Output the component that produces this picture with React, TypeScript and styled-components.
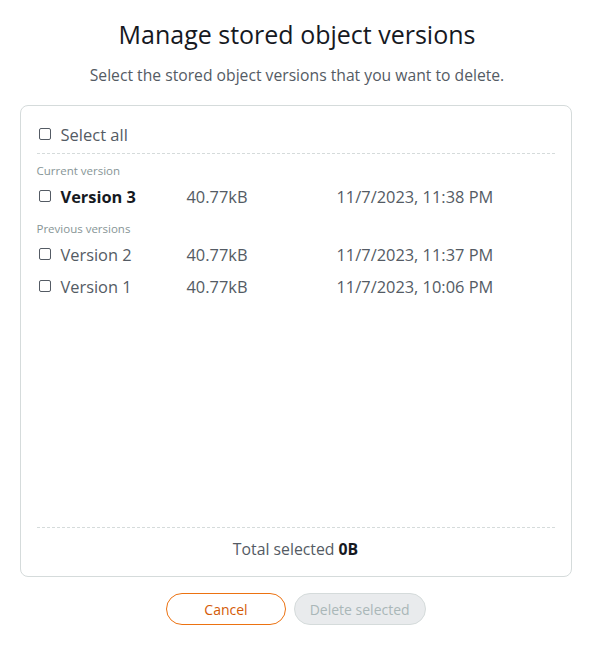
import React from "react";
import styled, { createGlobalStyle } from "styled-components";

const versions = {
  current: [{ id: 3, name: "Version 3", size: "40.77kB", date: "11/7/2023, 11:38 PM" }],
  previous: [
    { id: 2, name: "Version 2", size: "40.77kB", date: "11/7/2023, 11:37 PM" },
    { id: 1, name: "Version 1", size: "40.77kB", date: "11/7/2023, 10:06 PM" },
  ],
};

const App = () => {
  return (
    <>
      <GlobalStyle />
      <Page>
        <Title>Manage stored object versions</Title>
        <Subtitle>Select the stored object versions that you want to delete.</Subtitle>
        <Panel>
          <SelectAll>
            <Check type="checkbox" id="all" />
            <label htmlFor="all">Select all</label>
          </SelectAll>
          <List>
            <GroupLabel>Current version</GroupLabel>
            {versions.current.map(v => (
              <Row key={v.id} $current>
                <NameCell>
                  <Check type="checkbox" />
                  <span>{v.name}</span>
                </NameCell>
                <span>{v.size}</span>
                <span>{v.date}</span>
              </Row>
            ))}
            <GroupLabel $spaced>Previous versions</GroupLabel>
            {versions.previous.map(v => (
              <Row key={v.id}>
                <NameCell>
                  <Check type="checkbox" />
                  <span>{v.name}</span>
                </NameCell>
                <span>{v.size}</span>
                <span>{v.date}</span>
              </Row>
            ))}
          </List>
          <Total>
            Total selected <b>0B</b>
          </Total>
        </Panel>
        <Actions>
          <Button>Cancel</Button>
          <Button $primary disabled>
            Delete selected
          </Button>
        </Actions>
      </Page>
    </>
  );
};

const GlobalStyle = createGlobalStyle`
  body {
    margin: 0;
    background: #fff;
    font-family: "Open Sans", "Noto Sans", sans-serif;
    color: #545b64;
  }
`;

const Page = styled.main`
  width: 594px;
  display: flex;
  flex-direction: column;
  align-items: center;
`;

const Title = styled.h1`
  margin: 17px 0 0;
  font-size: 25px;
  font-weight: 400;
  line-height: 34px;
  color: #16191f;
`;

const Subtitle = styled.p`
  margin: 14px 0 0;
  font-size: 15.7px;
  line-height: 20px;
  color: #545b64;
`;

const Panel = styled.section`
  box-sizing: border-box;
  margin: 20px 0 0 -3px;
  width: 552px;
  height: 472px;
  border: 1px solid #d5dbdb;
  border-radius: 8px;
  padding: 0 16px;
  display: flex;
  flex-direction: column;
`;

const SelectAll = styled.div`
  display: flex;
  align-items: center;
  height: 48px;
  padding-top: 9px;
  box-sizing: border-box;
  font-size: 16.5px;
  border-bottom: 1px dashed #d5dbdb;

  & label {
    cursor: pointer;
  }
`;

const List = styled.div`
  flex: 1;
  border-bottom: 1px dashed #d5dbdb;
  padding-top: 9px;
`;

const GroupLabel = styled.div<{ $spaced?: boolean }>`
  font-size: 11.5px;
  line-height: 16px;
  margin: ${p => (p.$spaced ? 9 : 0)}px 0 1px;
  color: #879596;
`;

const Row = styled.div<{ $current?: boolean }>`
  display: grid;
  grid-template-columns: 150px 150px 1fr;
  align-items: center;
  height: 32px;
  font-size: 16.4px;
  color: #545b64;

  & > div span {
    font-weight: ${p => (p.$current ? 700 : 400)};
    color: ${p => (p.$current ? "#16191f" : "#545b64")};
  }
`;

const NameCell = styled.div`
  display: flex;
  align-items: center;
`;

const Check = styled.input`
  all: unset;
  box-sizing: border-box;
  width: 12px;
  height: 12px;
  border: 1px solid #545b64;
  border-radius: 2px;
  margin: 0 10px 0 2px;
  cursor: pointer;
`;

const Total = styled.div`
  height: 48px;
  padding-bottom: 7px;
  box-sizing: border-box;
  display: flex;
  align-items: center;
  justify-content: center;
  font-size: 15.8px;

  & b {
    margin-left: 4px;
    color: #16191f;
  }
`;

const Actions = styled.div`
  display: flex;
  gap: 8px;
  margin: 16px 0 0 -2px;
`;

const Button = styled.button<{ $primary?: boolean }>`
  box-sizing: border-box;
  height: 32px;
  padding: 0 ${p => (p.$primary ? 15 : 37)}px;
  border-radius: 16px;
  font-family: inherit;
  font-size: 14px;
  cursor: pointer;
  background: #fff;
  border: 1px solid #ec7211;
  color: #d45b07;

  &:disabled {
    cursor: default;
    background: #e9ebed;
    border-color: #d5dbdb;
    color: #aab7b8;
  }
`;

export default App;
